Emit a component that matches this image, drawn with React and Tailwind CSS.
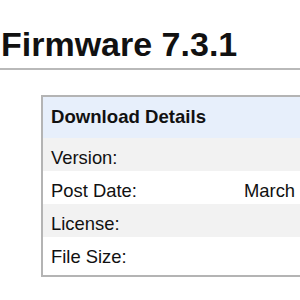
import React from 'react';

const rows = [
  { label: 'Version:', value: '' },
  { label: 'Post Date:', value: 'March 7, 2016' },
  { label: 'License:', value: '' },
  { label: 'File Size:', value: '' },
];

function App() {
  return (
    <div className="w-[300px] h-[300px] overflow-hidden bg-white text-[#111] font-['Liberation_Sans',Arial,sans-serif]">
      {/* Page title */}
      <div className="pt-[24px] pb-[4px] pl-[1px] border-b-2 border-[#b9b9b9]">
        <h1 className="text-[34px] leading-[40px] font-bold whitespace-nowrap">Firmware 7.3.1</h1>
      </div>

      {/* Details box */}
      <div className="mt-[25px] ml-[41px] w-[420px] border-2 border-[#b4b4b4] pb-[5px] bg-white">
        <div className="h-[41px] pt-[7px] pl-[8px] bg-[#e7effb] text-[18.6px] leading-[26px] font-bold">
          Download Details
        </div>
        {rows.map((row, i) => (
          <div
            key={row.label}
            className={`grid grid-cols-[193px_1fr] h-[33px] pt-[7px] pl-[8px] text-[18.4px] leading-[26px] whitespace-nowrap ${
              i % 2 === 0 ? 'bg-[#f2f2f2]' : 'bg-white'
            }`}
          >
            <span>{row.label}</span>
            <span>{row.value}</span>
          </div>
        ))}
      </div>
    </div>
  );
}

export default App;
